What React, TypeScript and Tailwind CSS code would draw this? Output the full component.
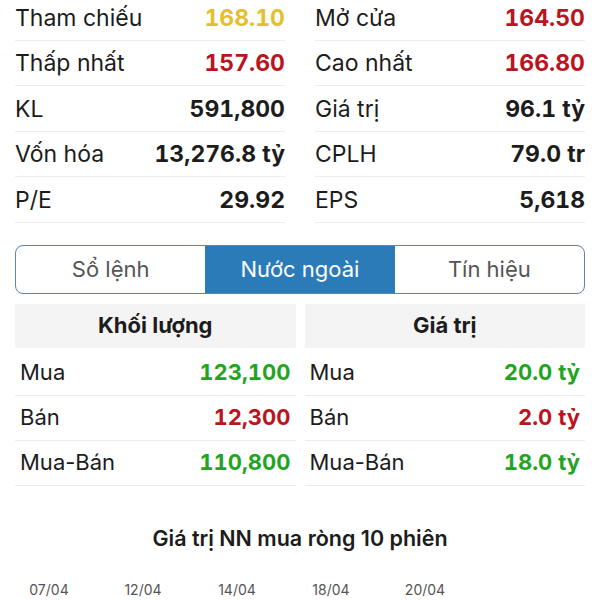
import React from "react";

type Row = { label: string; value: string; color?: string };

const leftRows: Row[] = [
  { label: "Tham chiếu", value: "168.10", color: "text-[#e5bf2b]" },
  { label: "Thấp nhất", value: "157.60", color: "text-[#bb1420]" },
  { label: "KL", value: "591,800" },
  { label: "Vốn hóa", value: "13,276.8 tỷ" },
  { label: "P/E", value: "29.92" },
];
const rightRows: Row[] = [
  { label: "Mở cửa", value: "164.50", color: "text-[#bb1420]" },
  { label: "Cao nhất", value: "166.80", color: "text-[#bb1420]" },
  { label: "Giá trị", value: "96.1 tỷ" },
  { label: "CPLH", value: "79.0 tr" },
  { label: "EPS", value: "5,618" },
];

const GREEN = "text-[#1fa51f]";
const RED = "text-[#bb1420]";

function InfoCol({ rows }: { rows: Row[] }) {
  return (
    <div className="flex flex-col">
      {rows.map((r) => (
        <div
          key={r.label}
          className="flex h-[45.5px] items-center justify-between border-b border-[#ececec] pt-[1px]"
        >
          <span className="text-[23px] text-[#1c1c1c]">{r.label}</span>
          <span
            className={`text-[23px] font-bold tabular-nums ${r.color ?? "text-[#1c1c1c]"}`}
          >
            {r.value}
          </span>
        </div>
      ))}
    </div>
  );
}

function SubTable({ title, rows }: { title: string; rows: Row[] }) {
  return (
    <div className="flex flex-col">
      <div className="flex h-[44px] items-center justify-center bg-[#f4f4f4]">
        <span className="text-[22px] font-bold text-[#1c1c1c]">{title}</span>
      </div>
      <div className="flex flex-col pt-[3px]">
        {rows.map((r) => (
          <div
            key={r.label}
            className="flex h-[45px] items-center justify-between border-b border-[#ececec] px-[5px]"
          >
            <span className="text-[22px] text-[#1c1c1c]">{r.label}</span>
            <span className={`text-[22px] font-bold tabular-nums ${r.color}`}>{r.value}</span>
          </div>
        ))}
      </div>
    </div>
  );
}

export default function App() {
  return (
    <div
      className="h-[600px] w-[600px] overflow-hidden bg-white"
      style={{ fontFamily: "Inter, 'Noto Sans', sans-serif" }}
    >
      <div className="-mt-[5px] grid grid-cols-2 gap-[30px] px-[15px]">
        <InfoCol rows={leftRows} />
        <InfoCol rows={rightRows} />
      </div>

      <div className="mx-[15px] mt-[22px] flex h-[49px] overflow-hidden rounded-[8px] border border-[#5a86ab]">
        <div className="flex flex-1 items-center justify-center text-[22px] text-[#555]">Sổ lệnh</div>
        <div className="flex flex-1 items-center justify-center bg-[#2b7bb9] text-[22px] text-white">
          Nước ngoài
        </div>
        <div className="flex flex-1 items-center justify-center text-[22px] text-[#555]">Tín hiệu</div>
      </div>

      <div className="mt-[10px] grid grid-cols-2 gap-[9px] px-[15px]">
        <SubTable
          title="Khối lượng"
          rows={[
            { label: "Mua", value: "123,100", color: GREEN },
            { label: "Bán", value: "12,300", color: RED },
            { label: "Mua-Bán", value: "110,800", color: GREEN },
          ]}
        />
        <SubTable
          title="Giá trị"
          rows={[
            { label: "Mua", value: "20.0 tỷ", color: GREEN },
            { label: "Bán", value: "2.0 tỷ", color: RED },
            { label: "Mua-Bán", value: "18.0 tỷ", color: GREEN },
          ]}
        />
      </div>

      <div className="mt-[36px] text-center text-[21.5px] font-semibold text-[#1c1c1c]">
        Giá trị NN mua ròng 10 phiên
      </div>

      <div className="mt-[25px] flex pl-[2px] text-[14px] text-[#555]">
        {["07/04", "12/04", "14/04", "18/04", "20/04"].map((d) => (
          <div key={d} className="w-[94px] text-center">
            {d}
          </div>
        ))}
      </div>
    </div>
  );
}
